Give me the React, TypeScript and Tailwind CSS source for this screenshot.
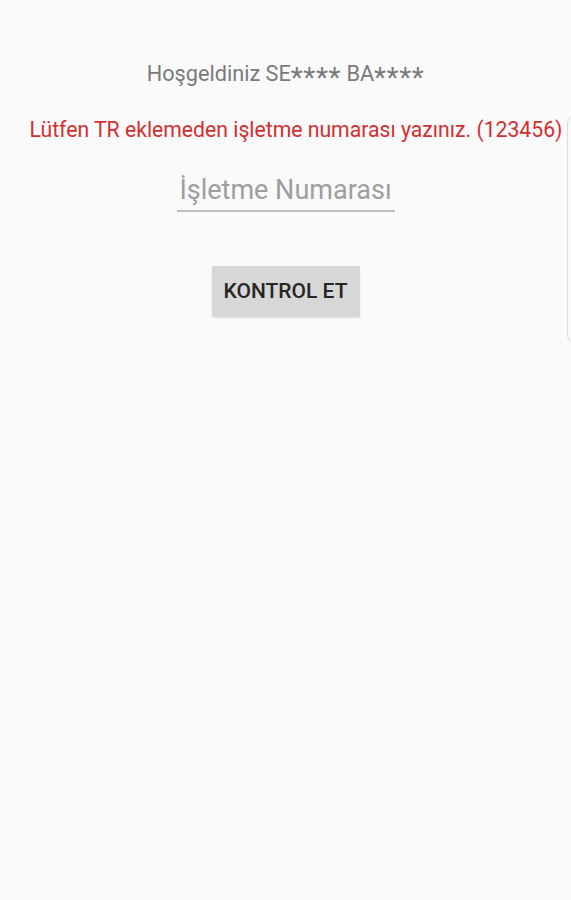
import { useState } from 'react';

function Stars() {
  return <span className="relative top-[6px] text-[28px] leading-none tracking-[0.5px]">****</span>;
}

export default function App() {
  const [num, setNum] = useState('');

  return (
    <div className="relative min-h-[900px] w-full overflow-hidden bg-[#fafafa] font-['Roboto',sans-serif]">
      <div className="flex flex-col items-center pt-[58px]">
        {/* karşılama */}
        <p className="h-[26px] text-[21.7px] leading-[26px] text-[#7a7a7a] whitespace-nowrap">
          Hoşgeldiniz SE<Stars /> BA<Stars />
        </p>

        {/* uyarı */}
        <p className="mt-[33px] text-[21.2px] leading-[26px] text-[#d32f2f] whitespace-nowrap pl-[21px]">
          Lütfen TR eklemeden işletme numarası yazınız. (123456)
        </p>

        {/* giriş */}
        <input
          value={num}
          onChange={(e) => setNum(e.target.value)}
          placeholder="İşletme Numarası"
          className="mt-[31px] w-[218px] border-b-2 border-[#bdbdbd] bg-transparent pb-[4px] text-center text-[27px] leading-[32px] text-[#212121] placeholder:text-[#9e9e9e] outline-none"
        />

        <button className="mt-[54px] h-[51px] w-[148px] rounded-[2px] bg-[#d6d7d7] text-[21px] font-medium text-[#262626] shadow-[0_1px_2px_rgba(0,0,0,0.12)]">
          KONTROL ET
        </button>
      </div>

      {/* sağ kenardaki panel */}
      <div className="absolute left-[567px] top-[115px] h-[228px] w-[40px] rounded-[8px] border border-[#dcdcdc] bg-[#fafafa]" />
    </div>
  );
}
